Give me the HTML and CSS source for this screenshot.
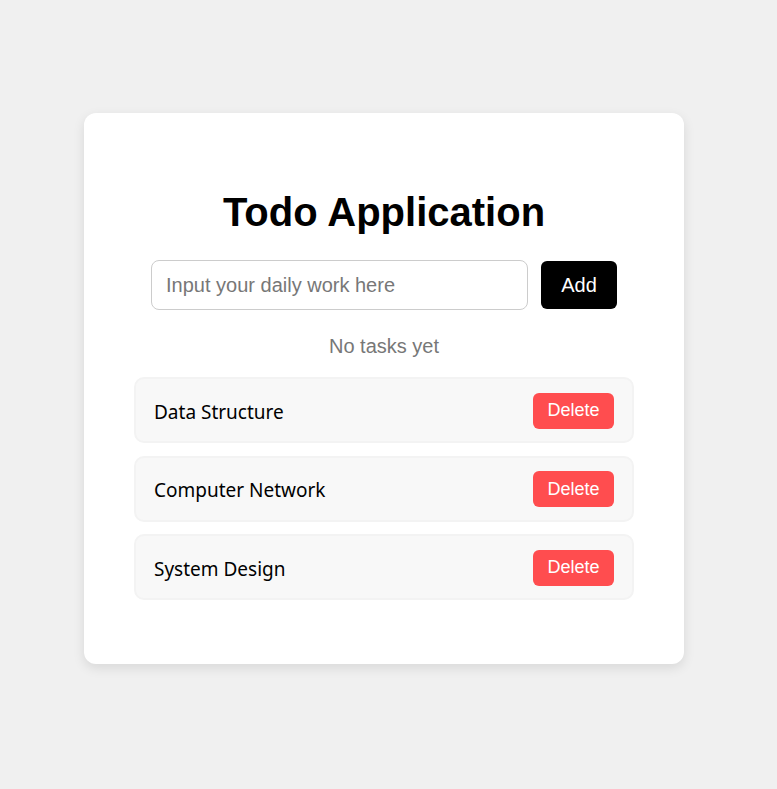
FILE: index.html
```html
<!DOCTYPE html>
<html lang="en">
<head>
<meta charset="utf-8">
<title>Todo Application</title>
<link rel="stylesheet" href="styles.css">
</head>
<body>
  <main class="card">
    <h1 class="title">Todo Application</h1>
    <div class="add-row">
      <input class="task-input" type="text" placeholder="Input your daily work here">
      <button class="add-btn">Add</button>
    </div>
    <p class="empty">No tasks yet</p>
    <ul class="task-list">
      <li class="task"><span class="task-name">Data Structure</span><button class="delete-btn">Delete</button></li>
      <li class="task"><span class="task-name">Computer Network</span><button class="delete-btn">Delete</button></li>
      <li class="task"><span class="task-name">System Design</span><button class="delete-btn">Delete</button></li>
    </ul>
  </main>
</body>
</html>
```
FILE: styles.css
```css
html, body {
  margin: 0;
  padding: 0;
}
body {
  background: #f0f0f0;
  font-family: "Liberation Sans", Arial, sans-serif;
  padding-top: 113px;
  min-height: 789px;
  box-sizing: border-box;
}
.card {
  width: 600px;
  box-sizing: border-box;
  margin-left: 84px;
  background: #ffffff;
  border-radius: 12px;
  box-shadow: 0 4px 12px rgba(0, 0, 0, 0.1);
  padding: 76px 50px 64px;
  display: flex;
  flex-direction: column;
  align-items: center;
}
.title {
  margin: 0 0 25px;
  font-size: 40px;
  font-weight: bold;
  line-height: 46px;
  color: #000;
}
.add-row {
  display: flex;
  align-items: center;
  gap: 13px;
}
.task-input {
  width: 377px;
  height: 50px;
  box-sizing: border-box;
  border: 1px solid #cccccc;
  border-radius: 8px;
  padding: 0 14px;
  font-family: "Liberation Sans", Arial, sans-serif;
  font-size: 20px;
  color: #000;
  outline: none;
}
.task-input::placeholder {
  color: #777777;
}
.add-btn {
  width: 76px;
  height: 48px;
  border: none;
  border-radius: 6px;
  background: #000;
  color: #fff;
  font-family: "Liberation Sans", Arial, sans-serif;
  font-size: 20px;
  padding: 0;
}
.empty {
  margin: 25px 0 19px;
  font-size: 20px;
  line-height: 23px;
  color: #777777;
}
.task-list {
  list-style: none;
  margin: 0;
  padding: 0;
  width: 500px;
  display: flex;
  flex-direction: column;
  gap: 12.5px;
}
.task {
  display: flex;
  align-items: center;
  justify-content: space-between;
  height: 66px;
  box-sizing: border-box;
  padding: 0 18px 0 18px;
  background: #f8f8f8;
  border: 2px solid #f3f3f3;
  border-radius: 10px;
}
.task-name {
  font-family: "Noto Sans", "Open Sans", sans-serif;
  font-size: 19px;
  padding-top: 3px;
  color: #000;
}
.delete-btn {
  width: 81px;
  height: 36px;
  padding: 0;
  margin-top: 1px;
  border: none;
  border-radius: 6px;
  background: #ff4d4f;
  color: #fff;
  font-family: "Liberation Sans", Arial, sans-serif;
  font-size: 18px;
}
```
